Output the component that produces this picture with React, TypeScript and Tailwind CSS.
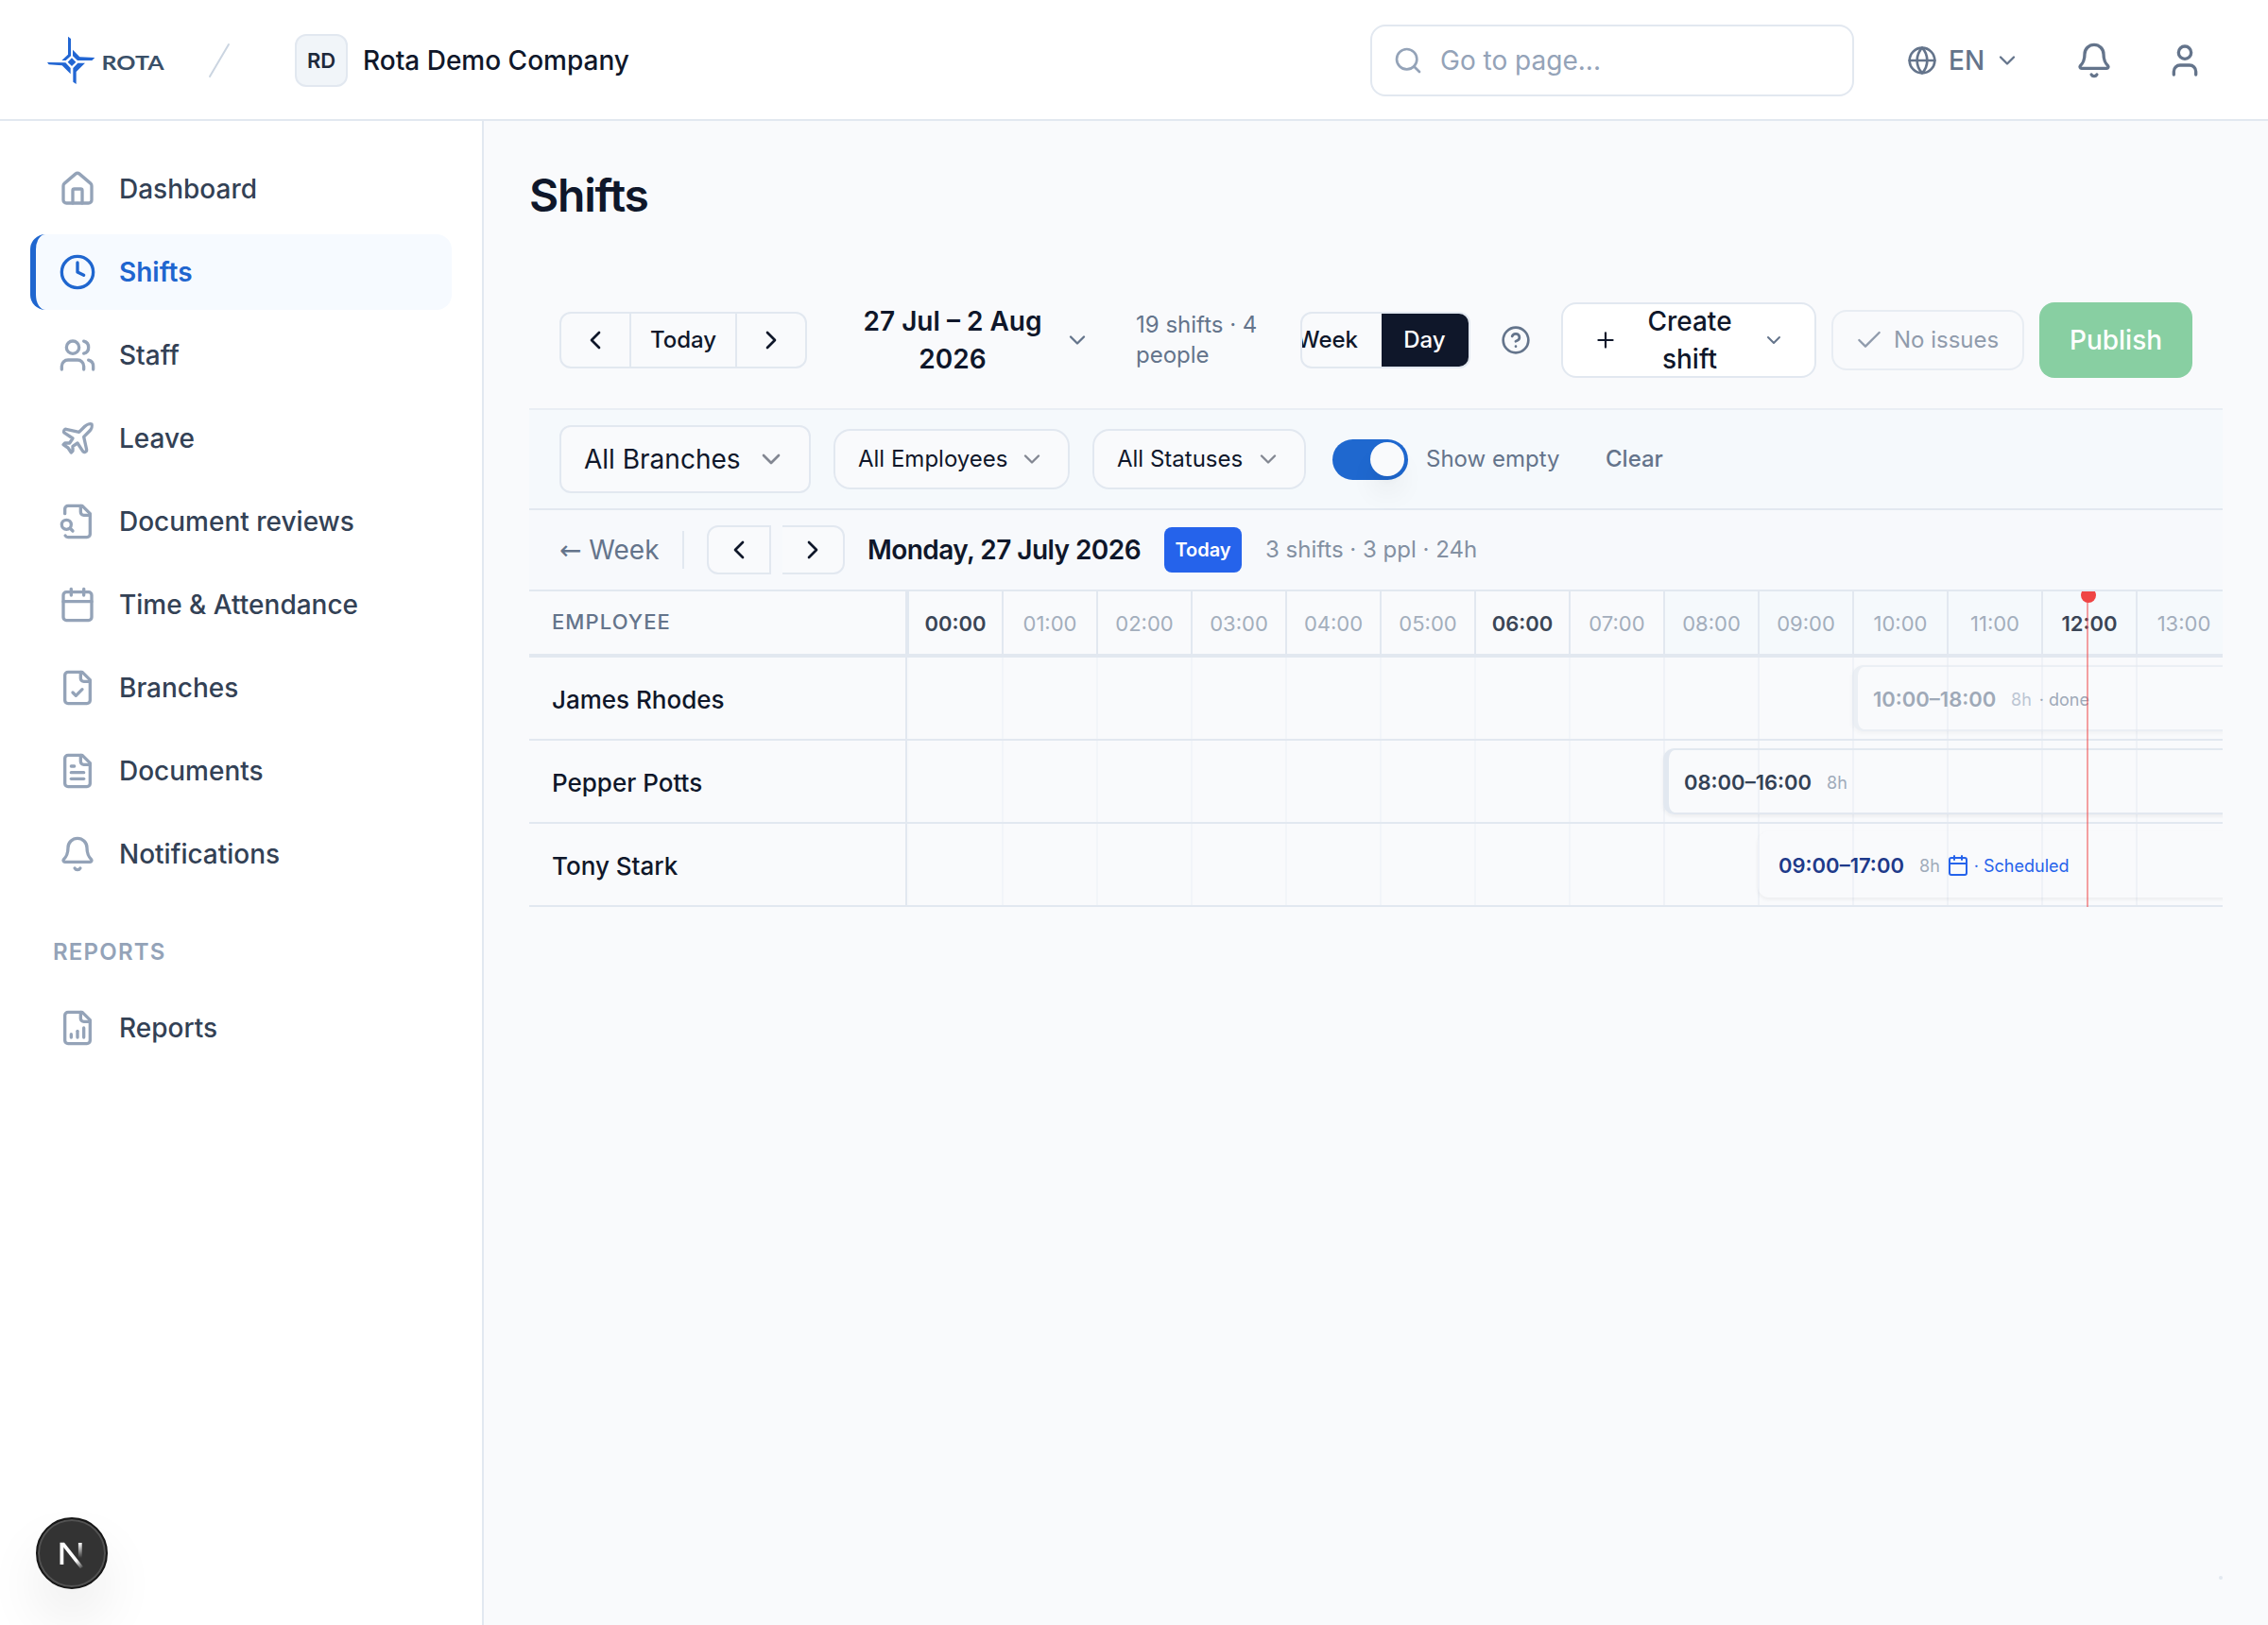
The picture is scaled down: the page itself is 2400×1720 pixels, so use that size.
import React from "react";
import {
  Bell,
  Calendar,
  Check,
  ChevronDown,
  ChevronLeft,
  ChevronRight,
  CircleQuestionMark,
  Clock,
  Globe,
  House,
  Plane,
  Plus,
  Search,
  User,
  Users,
} from "lucide-react";

function FileIcon({ children, body }: { children?: React.ReactNode; body?: string }) {
  return (
    <svg
      viewBox="0 0 24 24"
      className="size-10"
      fill="none"
      stroke="currentColor"
      strokeWidth="2"
      strokeLinecap="round"
      strokeLinejoin="round"
    >
      <path d={body ?? "M15 2H6a2 2 0 0 0-2 2v16a2 2 0 0 0 2 2h12a2 2 0 0 0 2-2V7Z"} />
      <path d="M14 2v4a2 2 0 0 0 2 2h4" />
      {children}
    </svg>
  );
}

const navItems = [
  { label: "Dashboard", icon: <House className="size-10" /> },
  { label: "Shifts", icon: <Clock className="size-10" />, active: true },
  { label: "Staff", icon: <Users className="size-10" /> },
  { label: "Leave", icon: <Plane className="size-10" /> },
  {
    label: "Document reviews",
    icon: (
      <FileIcon body="M4.268 21a2 2 0 0 0 1.727 1H18a2 2 0 0 0 2-2V7l-5-5H6a2 2 0 0 0-2 2v3">
        <path d="m9 18-1.5-1.5" />
        <circle cx="5" cy="14" r="3" />
      </FileIcon>
    ),
  },
  { label: "Time & Attendance", icon: <Calendar className="size-10" /> },
  {
    label: "Branches",
    icon: (
      <FileIcon>
        <path d="m9 15 2 2 4-4" />
      </FileIcon>
    ),
  },
  {
    label: "Documents",
    icon: (
      <FileIcon>
        <path d="M10 9H8" />
        <path d="M16 13H8" />
        <path d="M16 17H8" />
      </FileIcon>
    ),
  },
  { label: "Notifications", icon: <Bell className="size-10" /> },
];

function NavItem({ label, icon, active }: { label: string; icon: React.ReactNode; active?: boolean }) {
  return (
    <a
      className={
        active
          ? "flex h-20 items-center gap-6 rounded-2xl border-l-6 border-[#1f66cf] bg-[#f6faff] pl-6 text-[#1f66cf]"
          : "flex h-20 items-center gap-6 rounded-2xl border-l-6 border-transparent pl-6 text-[#334155]"
      }
    >
      <span className={active ? "text-[#1f66cf]" : "text-[#94a3b8]"}>{icon}</span>
      <span className={active ? "text-[28px] font-semibold" : "text-[28px] font-medium"}>{label}</span>
    </a>
  );
}

function Logo() {
  return (
    <svg viewBox="0 0 220 70" className="h-[70px] w-[220px]">
      <g transform="scale(0.33333)" fill="#2266d3">
        <path d="M96 26 105 33V88L89 102H76L96 83Z" />
        <path d="M111 68 133 91 181 93 172 102H126L111 88Z" />
        <path d="M150 110 122 138V177L112 170V126L127 110Z" />
        <path d="M30 108 88 109 104 126V145L77 118 35 115Z" />
        <path d="M108 94 121 107 108 120 95 107Z" />
      </g>
      <text
        x="67.5"
        y="44"
        textLength="66"
        lengthAdjust="spacingAndGlyphs"
        fill="#3a5068"
        fontFamily="Lato, sans-serif"
        fontWeight="700"
        fontSize="20.5"
      >
        ROTA
      </text>
      <path d="M182 51 202 17" stroke="#cbd5e1" strokeWidth="2" strokeLinecap="round" />
    </svg>
  );
}

function Header() {
  return (
    <header className="flex h-32 shrink-0 items-center border-b-2 border-[#e2e8f0] bg-white pt-0.5 pl-10">
      <div className="h-[70px] w-[272px] pt-px">
        <Logo />
      </div>
      <div className="flex size-14 items-center justify-center rounded-xl border-2 border-[#e2e8f0] bg-[#f1f5f9] text-[22px] font-semibold text-[#1e293b]">
        RD
      </div>
      <div className="ml-4 text-[28px] font-medium text-[#0f172a]">Rota Demo Company</div>
      <div className="ml-auto flex h-[76px] w-[512px] items-center rounded-2xl border-2 border-[#e2e8f0] pl-[22px]">
        <Search className="size-8 text-[#94a3b8]" />
        <span className="ml-[18px] text-[28px] text-[#94a3b8]">Go to page...</span>
      </div>
      <div className="ml-14 flex w-[138px] items-center text-[#64748b]">
        <Globe className="size-8 shrink-0" />
        <span className="ml-3 w-10 text-[28px] font-medium">EN</span>
        <ChevronDown className="ml-2 size-7 shrink-0" />
      </div>
      <Bell className="ml-10 size-10 text-[#64748b]" />
      <User className="mr-[68px] ml-14 size-10 text-[#64748b]" />
    </header>
  );
}

function Sidebar() {
  return (
    <aside className="relative w-[512px] shrink-0 border-r-2 border-[#e2e8f0] bg-white px-8 pt-8">
      <nav className="flex flex-col gap-2">
        {navItems.map((n) => (
          <NavItem key={n.label} {...n} />
        ))}
      </nav>
      <div className="mt-12 flex h-8 items-center pl-6 text-[24px] font-semibold tracking-[0.05em] text-[#94a3b8]">
        REPORTS
      </div>
      <div className="mt-6">
        <NavItem
          label="Reports"
          icon={
            <FileIcon>
              <path d="M8 18v-2" />
              <path d="M12 18v-4" />
              <path d="M16 18v-6" />
            </FileIcon>
          }
        />
      </div>
      <div className="absolute top-[1478px] left-[38px] flex size-[76px] items-center justify-center rounded-full border-2 border-[#171717] bg-[#333] shadow-[inset_0_0_0_2px_#525252,0_32px_64px_-8px_rgba(0,0,0,0.12)]">
        <svg viewBox="0 0 76 76" className="size-[76px] shrink-0" fill="none" strokeWidth="3.8">
          <defs>
            <linearGradient id="diag" x1="40" y1="42" x2="50" y2="54" gradientUnits="userSpaceOnUse">
              <stop stopColor="#fff" />
              <stop offset="0.3" stopColor="#fff" />
              <stop offset="1" stopColor="#fff" stopOpacity="0" />
            </linearGradient>
            <linearGradient id="stem" x1="0" y1="27" x2="0" y2="43" gradientUnits="userSpaceOnUse">
              <stop stopColor="#fff" />
              <stop offset="1" stopColor="#fff" stopOpacity="0" />
            </linearGradient>
          </defs>
          <path d="M27.4 50V27" stroke="#fff" />
          <path d="M25.5 26.8H30L50 52.2 47 54.2 27 29Z" fill="url(#diag)" />
          <rect x="44.9" y="27" width="3.8" height="16" fill="url(#stem)" />
        </svg>
      </div>
    </aside>
  );
}

function Toolbar() {
  return (
    <div className="flex h-[146px] items-center border-b-2 border-[#e9eef4] pl-8 text-[#0f172a]">
      <div className="flex h-[60px] w-[262px] shrink-0 rounded-xl border-2 border-[#e2e8f0]">
        <div className="flex w-[74px] items-center justify-center border-r-2 border-[#e2e8f0]">
          <ChevronLeft className="size-8" />
        </div>
        <div className="flex w-28 items-center justify-center border-r-2 border-[#e2e8f0] text-[24px] font-medium">
          Today
        </div>
        <div className="flex w-[72px] items-center justify-center">
          <ChevronRight className="size-8" />
        </div>
      </div>
      <div className="ml-[54px] w-[200px] shrink-0 text-center text-[28px] leading-10 font-semibold">
        27 Jul – 2 Aug 2026
      </div>
      <ChevronDown className="ml-[18px] size-7 shrink-0 text-[#64748b]" />
      <div className="ml-12 w-[150px] shrink-0 text-[24px] leading-8 text-[#64748b]">
        19 shifts · 4 people
      </div>
      <div className="ml-6 flex h-[60px] w-[180px] shrink-0 justify-end overflow-hidden rounded-xl border-2 border-[#e2e8f0] text-[24px] font-medium">
        <div className="flex shrink-0 items-center pr-[25px] pl-6">Week</div>
        <div className="flex w-[92px] shrink-0 items-center justify-center bg-[#0f172a] pr-px text-white">Day</div>
      </div>
      <CircleQuestionMark className="ml-8 size-8 shrink-0 text-[#64748b]" />
      <div className="ml-8 flex h-20 w-[270px] shrink-0 items-center rounded-2xl border-2 border-[#e2e8f0] bg-white">
        <Plus className="ml-8 size-[26px] shrink-0" />
        <div className="ml-[23px] w-[106px] text-center text-[28px] leading-10 font-medium">Create shift</div>
        <ChevronDown className="ml-6 size-6 shrink-0 text-[#64748b]" />
      </div>
      <div className="ml-4 flex h-16 w-[204px] shrink-0 items-center rounded-2xl border-2 border-[#e2e8f0] pl-[22px] text-[#64748b] opacity-70">
        <Check className="size-8" strokeWidth={1.75} />
        <span className="ml-2.5 text-[24px]">No issues</span>
      </div>
      <div className="ml-4 flex h-20 w-[162px] shrink-0 items-center justify-center rounded-2xl bg-[#88cfa2] text-[28px] font-medium text-white">
        Publish
      </div>
    </div>
  );
}

function Filters() {
  return (
    <div className="flex h-[106px] items-center border-b-2 border-[#e2e8f0] bg-[#f5f9fc] pl-8 text-[#0f172a]">
      <div className="flex h-[72px] w-[266px] items-center rounded-xl border-2 border-[#e2e8f0] bg-[#f9fafc] pl-6 text-[28px]">
        <span className="w-[172px]">All Branches</span>
        <ChevronDown className="ml-2.5 size-8 opacity-50" />
      </div>
      <div className="ml-6 flex h-16 w-[250px] items-center rounded-[18px] border-2 border-[#e2e8f0] bg-[#f9fafc] pl-6 text-[24px]">
        <span className="w-[160px]">All Employees</span>
        <ChevronDown className="ml-2.5 size-7 opacity-50" />
      </div>
      <div className="ml-6 flex h-16 w-[226px] items-center rounded-[18px] border-2 border-[#e2e8f0] bg-[#f9fafc] pl-6 text-[24px]">
        <span className="w-[136px]">All Statuses</span>
        <ChevronDown className="ml-2.5 size-7 opacity-50" />
      </div>
      <div className="ml-7 flex h-[43px] w-20 items-center justify-end rounded-full bg-[#1f68cf] pr-1">
        <div className="size-9 rounded-full bg-[#f9fafc] shadow-[0_20px_30px_-6px_rgba(0,0,0,0.1),0_8px_12px_-8px_rgba(0,0,0,0.1)]" />
      </div>
      <span className="ml-[19px] w-[142px] text-[24px] text-[#64748b]">Show empty</span>
      <span className="ml-12 text-[24px] font-medium text-[#64748b]">Clear</span>
    </div>
  );
}

function DayNav() {
  return (
    <div className="flex h-[86px] items-center border-b-2 border-[#e2e8f0] bg-[#f7f9fc] pl-8 text-[#0f172a]">
      <span className="w-[106px] text-[28px] whitespace-nowrap text-[#64748b]">
        <span className="font-['DejaVu_Sans',sans-serif] leading-none">←</span> Week
      </span>
      <span className="ml-6 h-10 w-0.5 bg-[#e2e8f0]" />
      <div className="ml-6 flex h-[52px] w-[68px] items-center justify-center rounded-l-xl border-2 border-[#e2e8f0] bg-[#f9fafc]">
        <ChevronLeft className="size-8" />
      </div>
      <div className="ml-3 flex h-[52px] w-[66px] items-center justify-center rounded-r-xl border-2 border-l-0 border-[#e2e8f0] bg-[#f9fafc]">
        <ChevronRight className="size-8" />
      </div>
      <span className="ml-6 w-[290px] text-[28px] font-semibold tracking-[-0.02em] whitespace-nowrap">
        Monday, 27 July 2026
      </span>
      <span className="ml-6 flex h-12 w-[82px] items-center justify-center rounded-lg bg-[#2563eb] text-[20px] font-semibold text-white">
        Today
      </span>
      <span className="ml-[25px] text-[24px] text-[#8390a2]">3 shifts · 3 ppl · 24h</span>
    </div>
  );
}

const hours = Array.from({ length: 14 }, (_, h) => h);

function TimelineHeader() {
  return (
    <div className="flex h-[70px] border-b-4 border-[#e2e8f0]">
      <div className="flex w-[400px] shrink-0 items-center border-r-2 border-[#e2e8f0] pb-0.5 pl-6 text-[22px] font-medium tracking-[0.05em] text-[#64748b]">
        EMPLOYEE
      </div>
      {hours.map((h) => (
        <div
          key={h}
          className={
            "flex w-[100px] shrink-0 items-center justify-center border-l-2 border-[#e2e8f0] pt-0.5 text-[22px] " +
            (h >= 8 ? "bg-[#f5f9fc] " : "") +
            (h % 6 === 0 ? "font-semibold text-[#3a4556]" : "text-[#a3aebc]")
          }
        >
          {String(h).padStart(2, "0")}:00
        </div>
      ))}
    </div>
  );
}

function gridLine(h: number) {
  if (h === 0) return "w-[100px] shrink-0 border-l-2 border-[#f7f9fb]";
  if (h < 8) return "w-[100px] shrink-0 border-l-2 border-[#f2f5f9]";
  return "w-[100px] shrink-0 border-l-2 border-[#eff2f7]";
}

function Row({ name, children }: { name: string; children: React.ReactNode }) {
  return (
    <div className="flex h-[88px] border-b-2 border-[#e2e8f0]">
      <div className="flex w-[400px] shrink-0 items-center border-r-2 border-[#e2e8f0] pt-0.5 pl-6 text-[26px] font-medium text-[#0f172a]">
        {name}
      </div>
      <div className="relative flex">
        {hours.map((h) => (
          <div key={h} className={gridLine(h)} />
        ))}
        {children}
      </div>
    </div>
  );
}

function Timeline() {
  return (
    <div className="relative overflow-hidden">
      <TimelineHeader />
      <Row name="James Rhodes">
        <div className="absolute top-2 left-[1000px] flex h-[70px] w-[800px] items-center rounded-xl border-2 border-l-6 border-[#e2e8f0] pt-0.5 pl-4 opacity-60 shadow-[0_2px_4px_rgba(0,0,0,0.06)]">
          <span className="w-[132px] text-[22px] font-semibold text-[#64748b]">10:00–18:00</span>
          <span className="ml-3.5 text-[18px] text-[#94a3b8]">8h</span>
          <span className="ml-2 text-[18px] text-[#64748b]">· done</span>
        </div>
      </Row>
      <Row name="Pepper Potts">
        <div className="absolute top-2 left-[800px] flex h-[70px] w-[800px] items-center rounded-xl border-2 border-l-6 border-[#e2e8f0] pt-0.5 pl-4 shadow-[0_2px_4px_rgba(0,0,0,0.06)]">
          <span className="w-[137px] text-[22px] font-semibold text-[#334155]">08:00–16:00</span>
          <span className="ml-3.5 text-[18px] text-[#a0abba]">8h</span>
        </div>
      </Row>
      <Row name="Tony Stark">
        <div className="absolute top-2 left-[900px] flex h-[70px] w-[800px] items-center rounded-xl pt-0.5 pl-[22px] shadow-[0_2px_4px_rgba(0,0,0,0.06)]">
          <span className="w-[135px] text-[22px] font-semibold text-[#1e3a8a]">09:00–17:00</span>
          <span className="ml-3.5 text-[18px] text-[#a0abba]">8h</span>
          <Calendar className="ml-[7px] size-6 text-[#2563eb]" />
          <span className="ml-[5px] text-[18px] text-[#2563eb]">· Scheduled</span>
        </div>
      </Row>
      <div className="absolute top-0 bottom-0 left-[1648px] w-0.5 bg-[#ef4444]/50" />
      <div className="absolute -top-1 left-[1642px] size-4 rounded-full bg-[#ef4444]" />
    </div>
  );
}

export default function App() {
  return (
    <div className="flex h-[1720px] w-[2400px] flex-col overflow-hidden bg-[#f9fafc] font-['Inter',sans-serif]">
      <Header />
      <div className="flex min-h-0 flex-1">
        <Sidebar />
        <main className="relative min-w-0 flex-1 px-12">
          <h1 className="mt-[47px] mb-[49px] flex h-16 items-center text-[48px] font-semibold tracking-[-0.025em] text-[#0f172a]">
            Shifts
          </h1>
          <div>
            <Toolbar />
            <Filters />
            <DayNav />
            <Timeline />
          </div>
          <div className="absolute right-12 bottom-12 size-1 rounded-full bg-[#e2e8f0]" />
        </main>
      </div>
    </div>
  );
}
